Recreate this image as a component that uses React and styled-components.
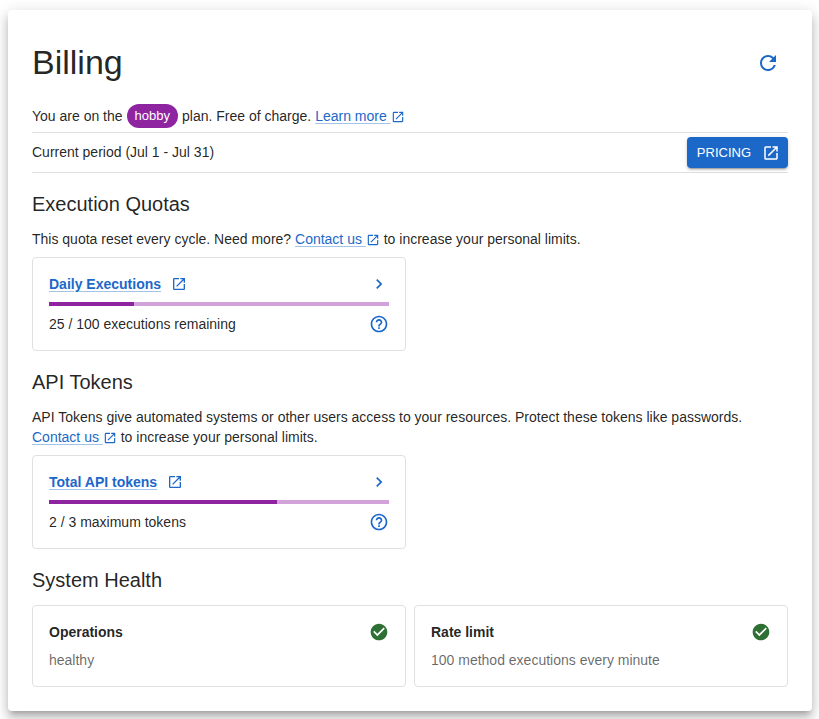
import React from "react";
import styled, { createGlobalStyle } from "styled-components";
import {
  MdCheckCircle,
  MdChevronRight,
  MdHelpOutline,
  MdOpenInNew,
  MdRefresh,
} from "react-icons/md";

const GlobalStyle = createGlobalStyle`
  *, *::before, *::after { box-sizing: border-box; }
  body {
    margin: 0;
    background: #fff;
    color: rgba(0, 0, 0, 0.87);
    font: 400 14px/20px "Liberation Sans", Helvetica, Arial, sans-serif;
    -webkit-font-smoothing: antialiased;
  }
  h1, h2, h3, p { margin: 0; font-weight: 400; }
  svg { display: block; flex: none; }
`;

const Paper = styled.main`
  margin: 10px 7px 8px 8px;
  padding: 24px;
  border-radius: 4px;
  background: #fff;
  box-shadow: 0 5px 5px -3px rgba(0, 0, 0, 0.2),
    0 8px 10px 1px rgba(0, 0, 0, 0.14), 0 3px 14px 2px rgba(0, 0, 0, 0.12);
`;

const Header = styled.header`
  display: flex;
  align-items: center;
  justify-content: space-between;
  padding: 8px 0;
`;

const Title = styled.h1`
  font-size: 34px;
  line-height: 40px;
  padding-bottom: 2px;
`;

const IconButton = styled.button`
  display: flex;
  padding: ${({ $pad }) => $pad || 0}px;
  border: 0;
  border-radius: 50%;
  background: none;
  color: #1c68c9;
  font-size: ${({ $size }) => $size || 20}px;
  cursor: pointer;
`;

const PlanRows = styled.div`
  margin-top: 8px;
`;

const PlanRow = styled.div`
  display: flex;
  align-items: center;
  justify-content: space-between;
  padding: 4px 0;
  border-bottom: 1px solid #e0e0e0;
`;

const PlanText = styled.p`
  display: flex;
  flex-wrap: wrap;
  align-items: center;
  column-gap: 4px;
`;

const PeriodText = styled.p`
  padding-bottom: 2px;
`;

const Chip = styled.span`
  padding: 0 8px;
  border-radius: 12px;
  background: #8e24a0;
  color: #fff;
  font-size: 13px;
  line-height: 24px;
`;

const TextLink = styled.a`
  color: #1c68c9;
  font-weight: ${({ $bold }) => ($bold ? 700 : 400)};
  text-decoration: underline;
  text-decoration-color: rgba(28, 104, 201, 0.4);
  text-underline-offset: 2px;
  white-space: pre;

  svg {
    display: inline-block;
    font-size: 14px;
    vertical-align: -3px;
  }
`;

const PricingButton = styled.a`
  display: flex;
  align-items: center;
  gap: 11px;
  height: 31px;
  padding: 0 8px 0 10px;
  border-radius: 4px;
  background: #1c68c9;
  box-shadow: 0 3px 1px -2px rgba(0, 0, 0, 0.2),
    0 2px 2px 0 rgba(0, 0, 0, 0.14), 0 1px 5px 0 rgba(0, 0, 0, 0.12);
  color: #fff;
  font-size: 13px;
  text-decoration: none;
  text-transform: uppercase;

  svg {
    font-size: 18px;
  }
`;

const Section = styled.section`
  display: grid;
  gap: 8px;
  margin-top: 16px;
`;

const SectionTitle = styled.h2`
  font-size: 20px;
  line-height: 30px;
  padding-bottom: 2px;
`;

const CardGrid = styled.div`
  display: grid;
  grid-template-columns: repeat(2, minmax(0, 1fr));
  gap: 8px;
`;

const Card = styled.article`
  display: grid;
  gap: 8px;
  padding: 16px;
  border: 1px solid #e0e0e0;
  border-radius: 4px;
`;

const CardRow = styled.div`
  display: flex;
  align-items: center;
  justify-content: space-between;
`;

const CardTitle = styled.h3`
  display: flex;
  align-items: center;
  gap: 10px;
  font-size: 14px;
  font-weight: 700;

  > svg {
    color: #1c68c9;
    font-size: 16px;
  }
`;

const Track = styled.div`
  height: 4px;
  background: #d2a2db;
`;

const Fill = styled.div`
  height: 100%;
  background: #8e24a0;
`;

const Muted = styled.p`
  color: rgba(0, 0, 0, 0.6);
`;

const StatusIcon = styled(MdCheckCircle)`
  color: #2e7033;
  font-size: 20px;
`;

function ExternalLink({ children }) {
  return (
    <TextLink href="#">
      {children} <MdOpenInNew aria-hidden="true" />
    </TextLink>
  );
}

function QuotaCard({ title, percent, detail }) {
  return (
    <Card>
      <CardRow>
        <CardTitle>
          <TextLink href="#" $bold>{title}</TextLink>
          <MdOpenInNew aria-hidden="true" />
        </CardTitle>
        <IconButton type="button" aria-label={`Open ${title}`}>
          <MdChevronRight />
        </IconButton>
      </CardRow>
      <Track
        role="progressbar"
        aria-label={title}
        aria-valuemin={0}
        aria-valuemax={100}
        aria-valuenow={percent}
      >
        <Fill style={{ width: `${percent}%` }} />
      </Track>
      <CardRow>
        <p>{detail}</p>
        <IconButton type="button" aria-label={`Help for ${title}`}>
          <MdHelpOutline />
        </IconButton>
      </CardRow>
    </Card>
  );
}

function HealthCard({ title, detail }) {
  return (
    <Card>
      <CardRow>
        <CardTitle>{title}</CardTitle>
        <StatusIcon aria-hidden="true" />
      </CardRow>
      <Muted>{detail}</Muted>
    </Card>
  );
}

export default function App() {
  return (
    <>
      <GlobalStyle />
      <Paper>
        <Header>
          <Title>Billing</Title>
          <IconButton type="button" aria-label="Refresh" $pad={8} $size={24}>
            <MdRefresh />
          </IconButton>
        </Header>

        <PlanRows>
          <PlanRow>
            <PlanText>
              <span>You are on the</span>
              <Chip>hobby</Chip>
              <span>plan. Free of charge.</span>
              <ExternalLink>Learn more</ExternalLink>
            </PlanText>
          </PlanRow>
          <PlanRow>
            <PeriodText>Current period (Jul 1 - Jul 31)</PeriodText>
            <PricingButton href="#">
              Pricing
              <MdOpenInNew aria-hidden="true" />
            </PricingButton>
          </PlanRow>
        </PlanRows>

        <Section>
          <SectionTitle>Execution Quotas</SectionTitle>
          <p>
            This quota reset every cycle. Need more?{" "}
            <ExternalLink>Contact us</ExternalLink> to increase your personal
            limits.
          </p>
          <CardGrid>
            <QuotaCard
              title="Daily Executions"
              percent={25}
              detail="25 / 100 executions remaining"
            />
          </CardGrid>
        </Section>

        <Section>
          <SectionTitle>API Tokens</SectionTitle>
          <p>
            API Tokens give automated systems or other users access to your
            resources. Protect these tokens like passwords.{" "}
            <ExternalLink>Contact us</ExternalLink> to increase your personal
            limits.
          </p>
          <CardGrid>
            <QuotaCard
              title="Total API tokens"
              percent={67}
              detail="2 / 3 maximum tokens"
            />
          </CardGrid>
        </Section>

        <Section>
          <SectionTitle>System Health</SectionTitle>
          <CardGrid>
            <HealthCard title="Operations" detail="healthy" />
            <HealthCard
              title="Rate limit"
              detail="100 method executions every minute"
            />
          </CardGrid>
        </Section>
      </Paper>
    </>
  );
}
